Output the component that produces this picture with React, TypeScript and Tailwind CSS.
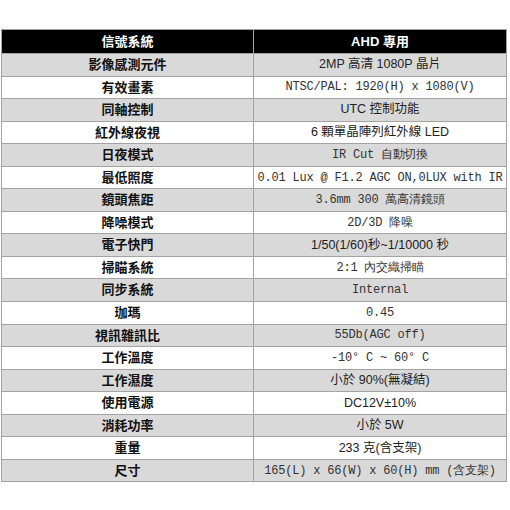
import React from 'react';

interface SpecRow {
  label: string;
  value: string;
  mono?: boolean;
}

const rows: SpecRow[] = [
  { label: '影像感測元件', value: '2MP 高清 1080P 晶片' },
  { label: '有效畫素', value: 'NTSC/PAL: 1920(H) x 1080(V)', mono: true },
  { label: '同軸控制', value: 'UTC 控制功能' },
  { label: '紅外線夜視', value: '6 顆單晶陣列紅外線 LED' },
  { label: '日夜模式', value: 'IR Cut 自動切換', mono: true },
  { label: '最低照度', value: '0.01 Lux @ F1.2 AGC ON,0LUX with IR', mono: true },
  { label: '鏡頭焦距', value: '3.6mm 300 萬高清鏡頭', mono: true },
  { label: '降噪模式', value: '2D/3D 降噪', mono: true },
  { label: '電子快門', value: '1/50(1/60)秒~1/10000 秒' },
  { label: '掃瞄系統', value: '2:1 內交織掃瞄', mono: true },
  { label: '同步系統', value: 'Internal', mono: true },
  { label: '珈瑪', value: '0.45', mono: true },
  { label: '視訊雜訊比', value: '55Db(AGC off)', mono: true },
  { label: '工作溫度', value: '-10° C ~ 60° C', mono: true },
  { label: '工作濕度', value: '小於 90%(無凝結)' },
  { label: '使用電源', value: 'DC12V±10%' },
  { label: '消耗功率', value: '小於 5W' },
  { label: '重量', value: '233 克(含支架)' },
  { label: '尺寸', value: '165(L) x 66(W) x 60(H) mm (含支架)', mono: true },
];

const sans = { fontFamily: '"Liberation Sans", "Noto Sans CJK TC", sans-serif' };

const App: React.FC = () => {
  return (
    <div className="w-[510px] h-[510px] bg-white pt-[29px] pl-[1px]" style={sans}>
      <div className="w-[506px] border border-[#a3a3a3]">
        <div className="flex h-[23px] bg-black text-white text-[13px] font-bold">
          <div className="w-[252px] flex items-center justify-center border-r border-[#a3a3a3]">
            信號系統
          </div>
          <div className="flex-1 flex items-center justify-center">AHD 專用</div>
        </div>
        {rows.map((row, i) => (
          <div
            key={row.label}
            className={`flex h-[22.55px] border-t border-[#a3a3a3] ${
              i % 2 === 0 ? 'bg-[#d9d9d9]' : 'bg-white'
            }`}
          >
            <div className="w-[252px] flex items-center justify-center border-r border-[#a3a3a3] text-[13px] font-bold text-[#111]">
              {row.label}
            </div>
            <div
              className={`flex-1 min-w-0 flex items-center justify-center whitespace-pre ${
                row.mono
                  ? 'font-mono text-[12px] tracking-[-0.2px] text-[#333]'
                  : 'text-[12.5px] text-[#222]'
              }`}
            >
              {row.value}
            </div>
          </div>
        ))}
      </div>
    </div>
  );
};

export default App;
